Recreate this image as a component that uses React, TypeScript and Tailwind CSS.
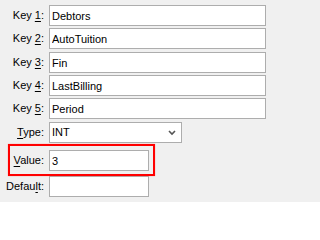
import type { ReactNode } from 'react'

const font = { fontFamily: '"Liberation Sans", Arial, sans-serif' }

// Label column is right aligned, the controls all start at x=49.
function Row({ label, className, children }: { label: ReactNode; className?: string; children: ReactNode }) {
  return (
    <div className={`flex h-[21px] items-center ${className ?? ''}`}>
      <label className="w-[44px] shrink-0 text-right text-black">{label}</label>
      <div className="ml-[5px] flex">{children}</div>
    </div>
  )
}

function Field({ value, width = 'w-[217px]' }: { value: string; width?: string }) {
  return (
    <input
      readOnly
      value={value}
      style={font}
      className={`h-[21px] ${width} border border-[#adadad] bg-white px-[2px] text-[11px] text-black outline-none`}
    />
  )
}

const keys = [
  { n: '1', value: 'Debtors', gap: '' },
  { n: '2', value: 'AutoTuition', gap: 'mt-[2px]' },
  { n: '3', value: 'Fin', gap: 'mt-[3px]' },
  { n: '4', value: 'LastBilling', gap: 'mt-[2px]' },
  { n: '5', value: 'Period', gap: 'mt-[2px]' }
]

export default function App() {
  return (
    <div style={font} className="flex min-h-[202px] min-w-[271px] flex-col bg-[#f0f0f0] pt-[5px] pb-[5px] text-[11px] leading-none">
      {keys.map(k => (
        <Row
          key={k.n}
          className={k.gap}
          label={
            <>
              Key <span className="underline underline-offset-[2px]">{k.n}</span>:
            </>
          }
        >
          <Field value={k.value} />
        </Row>
      ))}

      <Row
        className="mt-[3px]"
        label={
          <>
            <span className="underline underline-offset-[2px]">T</span>ype:
          </>
        }
      >
        <div className="flex h-[21px] w-[133px] items-center justify-between border border-[#adadad] bg-white pl-[2px] pr-[5px] text-black">
          <span>INT</span>
          <svg width="8" height="6" viewBox="0 0 8 6" className="mt-[1px]">
            <path d="M1 1 L4 4 L7 1" fill="none" stroke="#555" strokeWidth="1.6" />
          </svg>
        </div>
      </Row>

      <div className="relative mt-[7px]">
        <Row
          label={
            <>
              <span className="underline underline-offset-[2px]">V</span>alue:
            </>
          }
        >
          <Field value="3" width="w-[100px]" />
        </Row>
        <span className="pointer-events-none absolute top-[-6px] left-[8px] h-[32px] w-[147px] border-2 border-[#ff0000] shadow-[0_0_1px_#ff8080]" />
      </div>

      <Row
        className="mt-[5px]"
        label={
          <>
            Defau<span className="underline underline-offset-[2px]">l</span>t:
          </>
        }
      >
        <Field value="" width="w-[100px]" />
      </Row>
    </div>
  )
}
